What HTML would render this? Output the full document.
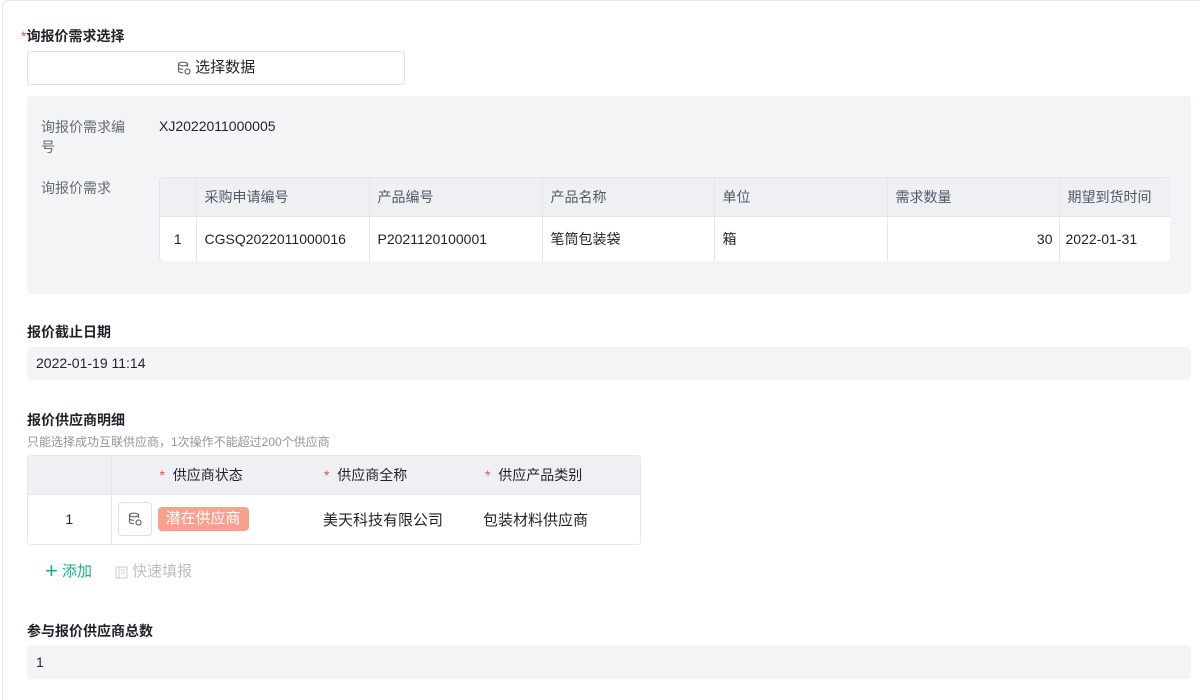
<!DOCTYPE html>
<html><head><meta charset="utf-8"><style>
*{box-sizing:border-box;margin:0;padding:0}
body{width:1200px;height:681px;overflow:hidden;background:#fff;font-family:"Liberation Sans","Noto Sans CJK SC",sans-serif;color:#1f2329;font-size:14px;position:relative}
.frame{position:absolute;left:2px;top:0;width:1200px;height:700px;border-left:1px solid #e8e8e8;border-top:1px solid #e8e8e8;border-radius:6px 0 0 0}
.a{position:absolute}
.t{font-weight:bold;font-size:14px;color:#1f2329}
.star{color:#f54a45;font-weight:normal}
.gray{background:#f3f4f6;border-radius:4px}
table{border-collapse:collapse;position:absolute;background:#fff;table-layout:fixed}
td,th{font-weight:normal;text-align:left;border-right:1px solid #e5e6eb;border-bottom:1px solid #e5e6eb;padding:0 8px;white-space:nowrap}
th{background:#eff0f3;color:#4e5969;height:38px}
td{height:45px}
.nb{border-right:none}
.ico{display:inline-block;vertical-align:middle}
</style></head><body>
<div class="frame"></div>
<div class="a t" style="left:21px;top:26px"><span class="star">*</span>询报价需求选择</div>
<div class="a" style="left:27px;top:51px;width:378px;height:34px;border:1px solid #dcdfe6;border-radius:4px;text-align:center;line-height:32px;color:#1f2329;font-size:15px">
<svg class="ico" width="14" height="14" viewBox="0 0 14 14" fill="none" stroke="#646a73" stroke-width="1.2"><ellipse cx="6" cy="3" rx="4.5" ry="1.8"/><path d="M1.5 3v7c0 1 2 1.8 4.5 1.8M10.5 3v3M1.5 6.5c0 1 2 1.8 4.5 1.8"/><circle cx="10.5" cy="10.5" r="2.5"/></svg> 选择数据</div>
<div class="a gray" style="left:27px;top:96px;width:1164px;height:198px"></div>
<div class="a" style="left:41px;top:117px;color:#646a73;line-height:20px;width:100px">询报价需求编<br>号</div>
<div class="a" style="left:159px;top:118px">XJ2022011000005</div>
<div class="a" style="left:41px;top:178px;color:#646a73">询报价需求</div>
<div class="a" style="left:159px;top:177px;width:1011px;height:84px;overflow:hidden;border-left:1px solid #e5e6eb;border-top:1px solid #e5e6eb;border-radius:4px">
<table style="left:0;top:0;width:1030px">
<colgroup><col style="width:36px"><col style="width:173px"><col style="width:173px"><col style="width:172px"><col style="width:173px"><col style="width:172px"><col style="width:131px"></colgroup>
<tr><th></th><th>采购申请编号</th><th>产品编号</th><th>产品名称</th><th>单位</th><th>需求数量</th><th>期望到货时间</th></tr>
<tr><td style="text-align:center;padding:0">1</td><td>CGSQ2022011000016</td><td>P2021120100001</td><td>笔筒包装袋</td><td>箱</td><td style="text-align:right;padding-right:6px">30</td><td style="padding-left:6px">2022-01-31</td></tr>
</table></div>
<div class="a t" style="left:27px;top:322px">报价截止日期</div>
<div class="a gray" style="left:27px;top:347px;width:1164px;height:33px;line-height:33px;padding-left:9px">2022-01-19 11:14</div>
<div class="a t" style="left:27px;top:410px">报价供应商明细</div>
<div class="a" style="left:27px;top:433px;font-size:12px;color:#8f959e">只能选择成功互联供应商，1次操作不能超过200个供应商</div>
<div class="a" style="left:27px;top:455px;width:614px;height:90px;overflow:hidden;border:1px solid #e5e6eb;border-bottom:none;border-radius:4px">
<table style="left:0;top:0;width:614px">
<colgroup><col style="width:83px"><col style="width:195px"><col style="width:161px"><col style="width:175px"></colgroup>
<tr><th></th><th class="nb" style="padding-left:48px;color:#1f2329"><span class="star">*</span>&nbsp; 供应商状态</th><th class="nb" style="padding-left:18px;color:#1f2329"><span class="star">*</span>&nbsp; 供应商全称</th><th class="nb" style="padding-left:18px;color:#1f2329"><span class="star">*</span>&nbsp; 供应产品类别</th></tr>
<tr><td style="text-align:center;height:50px">1</td><td class="nb" style="padding-left:6px"><span style="display:inline-block;width:34px;height:34px;border:1px solid #dcdfe6;border-radius:4px;vertical-align:middle;text-align:center;padding-top:9px"><svg width="14" height="14" viewBox="0 0 14 14" fill="none" stroke="#646a73" stroke-width="1.2"><ellipse cx="6" cy="3" rx="4.5" ry="1.8"/><path d="M1.5 3v7c0 1 2 1.8 4.5 1.8M10.5 3v3M1.5 6.5c0 1 2 1.8 4.5 1.8"/><circle cx="10.5" cy="10.5" r="2.5"/></svg></span><span style="display:inline-block;vertical-align:middle;margin-left:6px;background:#f9a08f;color:#fff;border-radius:4px;padding:0 8px;line-height:24px;font-size:15px">潜在供应商</span></td><td class="nb" style="padding-left:17px;font-size:15px">美天科技有限公司</td><td class="nb" style="padding-left:16px;font-size:15px">包装材料供应商</td></tr>
</table></div>
<div class="a" style="left:45px;top:560px;color:#14b08e;font-size:15px"><span style="font-size:22px;line-height:16px;vertical-align:-2px">+</span> 添加</div>
<div class="a" style="left:115px;top:560px;color:#bbbfc4;font-size:15px"><svg class="ico" width="13" height="13" viewBox="0 0 13 13" fill="none" stroke="#c9cdd4"><rect x="1" y="1" width="11" height="11"/><path d="M4 1v11M6 4h4M6 7h4"/></svg> 快速填报</div>
<div class="a t" style="left:27px;top:621px">参与报价供应商总数</div>
<div class="a gray" style="left:27px;top:645px;width:1164px;height:34px;line-height:34px;padding-left:9px">1</div>
</body></html>
